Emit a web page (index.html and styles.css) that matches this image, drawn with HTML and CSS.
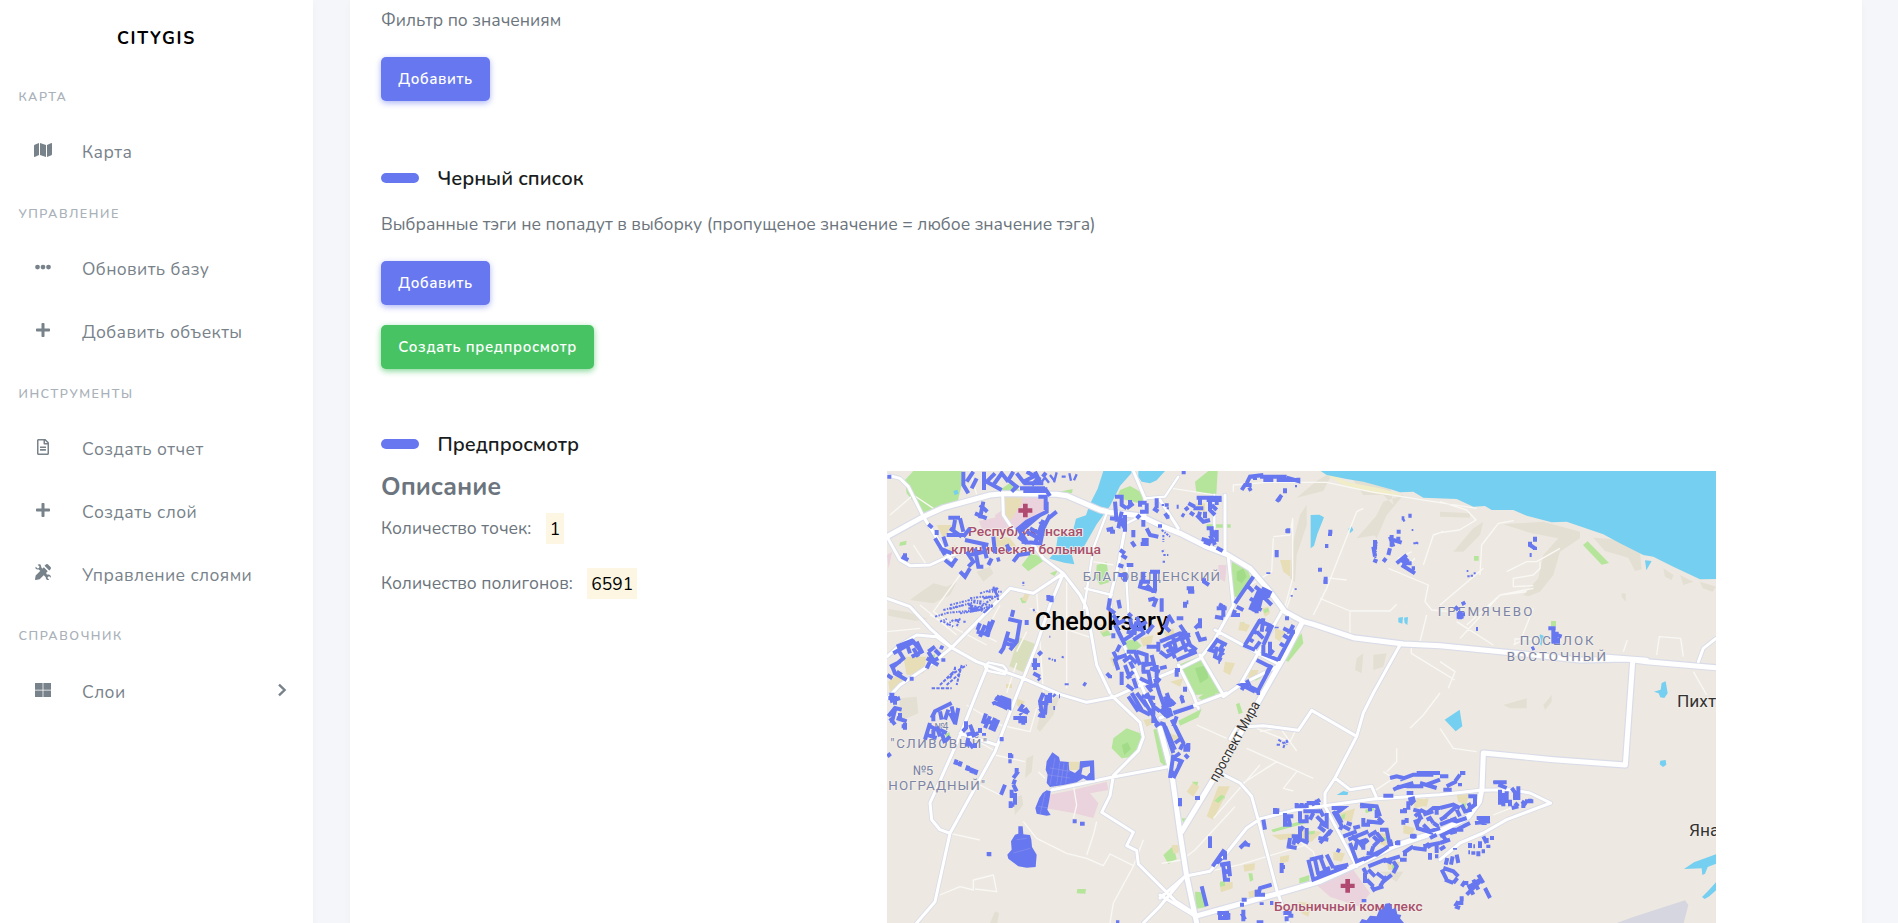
FILE: index.html
```html
<!DOCTYPE html>
<html lang="ru">
<head>
<meta charset="utf-8">
<title>CITYGIS</title>
<link rel="stylesheet" href="styles.css">
</head>
<body>
<div class="layout">
  <aside class="sidebar">
    <div class="brand">CITYGIS</div>
    <nav>
      <h6 class="nav-head">КАРТА</h6>
      <a class="nav-item"><svg class="ico" viewBox="0 0 576 512"><path d="M0 118v346c0 11 11 19 22 15l138-63V32L20 88C8 93 0 105 0 118zm192 298 192 64V96L192 32zM554 33 416 96v384l140-56c12-5 20-17 20-30V48c0-11-11-19-22-15z"/></svg><span>Карта</span></a>
      <h6 class="nav-head">УПРАВЛЕНИЕ</h6>
      <a class="nav-item"><svg class="ico" viewBox="0 0 512 512"><circle cx="80" cy="256" r="76"/><circle cx="256" cy="256" r="76"/><circle cx="432" cy="256" r="76"/></svg><span>Обновить базу</span></a>
      <a class="nav-item"><svg class="ico" viewBox="0 0 448 512"><path d="M416 208H272V64c0-18-14-32-32-32h-32c-18 0-32 14-32 32v144H32c-18 0-32 14-32 32v32c0 18 14 32 32 32h144v144c0 18 14 32 32 32h32c18 0 32-14 32-32V304h144c18 0 32-14 32-32v-32c0-18-14-32-32-32z"/></svg><span>Добавить объекты</span></a>
      <h6 class="nav-head">ИНСТРУМЕНТЫ</h6>
      <a class="nav-item"><svg class="ico" viewBox="0 0 384 512"><path d="M288 248v28c0 7-5 12-12 12H108c-7 0-12-5-12-12v-28c0-7 5-12 12-12h168c7 0 12 5 12 12zm-12 72H108c-7 0-12 5-12 12v28c0 7 5 12 12 12h168c7 0 12-5 12-12v-28c0-7-5-12-12-12zm108-188v332c0 27-21 48-48 48H48c-27 0-48-21-48-48V48C0 21 22 0 48 0h204c13 0 25 5 34 14l84 84c9 9 14 21 14 34zm-128-80v76h76zm80 412V176H232c-13 0-24-11-24-24V48H48v416z"/></svg><span>Создать отчет</span></a>
      <a class="nav-item"><svg class="ico" viewBox="0 0 448 512"><path d="M416 208H272V64c0-18-14-32-32-32h-32c-18 0-32 14-32 32v144H32c-18 0-32 14-32 32v32c0 18 14 32 32 32h144v144c0 18 14 32 32 32h32c18 0 32-14 32-32V304h144c18 0 32-14 32-32v-32c0-18-14-32-32-32z"/></svg><span>Создать слой</span></a>
      <a class="nav-item"><svg class="ico" viewBox="0 0 512 512"><path d="M22 364 0 488c-2 14 10 26 24 23l124-22 260-260L283 103zM497 94l-80-80c-19-19-51-19-70 0l-42 42 150 150 42-42c19-19 19-51 0-70zM110 164l74 68 66-66-40-50-30-90c-28-22-68-20-96 0l62 58-22 40-40 22-58-56C6 110 12 142 34 160c22 18 52 16 76 4zM350 280l-76 70 70 74 4 40c25 50 75 56 107 38l-58-58 20-36 36-20 54 48c10-38-12-78-46-92-30-10-60-6-76-4z"/></svg><span>Управление слоями</span></a>
      <h6 class="nav-head">СПРАВОЧНИК</h6>
      <a class="nav-item"><svg class="ico" viewBox="0 0 512 512"><path d="M0 32h244v212H0zM268 32h244v212H268zM0 268h244v212H0zM268 268h244v212H268z"/></svg><span>Слои</span><svg class="chev" viewBox="0 0 10 14"><path d="M2 1.6 7.6 7 2 12.4"/></svg></a>
    </nav>
  </aside>
  <main class="card">
    <p class="lead">Фильтр по значениям</p>
    <button class="btn">Добавить</button>
    <h2 class="title"><span>Черный список</span></h2>
    <p class="lead lead-black">Выбранные тэги не попадут в выборку (пропущеное значение = любое значение тэга)</p>
    <button class="btn">Добавить</button>
    <button class="btn btn-success">Создать предпросмотр</button>
    <h2 class="title title-preview"><span>Предпросмотр</span></h2>
    <div class="preview">
      <div class="about">
        <h3>Описание</h3>
        <p class="stat"><span>Количество точек:</span><mark>1</mark></p>
        <p class="stat"><span>Количество полигонов:</span><mark>6591</mark></p>
      </div>
      <svg class="map" viewBox="21 18 2487 1356">
        <defs>
          <path id="r1" d="M21 215 130 155 190 128 330 90 370 86 530 88 560 92 660 135 690 142 780 152 850 185 900 205 980 245 1040 268 1110 310 1170 380 1215 440 1270 470 1300 478 1420 518 1570 537 1680 542 1960 570 2100 585 2240 582 2300 590 2508 608M2170 576l130 10M945 1354l255-70 120-35 100-45 120-60 150-50 75-39 33-45 8-40 4-106 210 20 216 16 22-310M1265 475l-50 95-65 114-100 176-145 240M840 790l35 134 25 180 20 130 30 140"/>
          <path id="r2" d="M21 400l69 25 60 65 65 58 75 42 60 22 80 28 110 48 80 24 79-15 141-62 60-25 60-30 40-50 60-108-15-144M215 548l175-178 70 15 90-60-60-45-25-35-65-50-30-45-2-60M550 325l50 65 20 40 30 170 40 84M550 325l-40 95-40 120-60 150-65 170-135 245-45 205-55 64M320 610l-30 74-55 140-85 190 5 50 25 30 30 11M240 805l110 35M21 30l39 10 25 25 45 90 60 95 25 35M21 215l39 70 30 17 60-2 65-30 80-20M215 548l-45-33-60-5-50 30-39 35M215 548l-65 52-90 60-39 40M760 18l35 82v50M840 105l55 85M1035 90v178M735 190l-20 110-28 110 15 60 38 90 100 230M695 692l85 80 10 45-15 40-75 75-10 60-25 50 95 60-20 40 30 15 5 40 110 110 65 42M515 975l180-38 145-27 30-6M915 1234 990 1219 1040 1164 1100 1089 1140 1062 1240 1036 1335 1022 1480 1002 1680 989 1800 976 1890 974 1950 984 2012 1014 1880 1064 1810 1104 1740 1134 1680 1184M1030 929l50 25 35 40 25 90 50 190 35 100M1335 1024l95 180M1335 1024v-40l30-45 65-125 20-70 30-60 80-144M1365 939l45 35 65-10 15 35M1430 814l-135-78-40 60-105-14-80 5-20 35M915 1234l-75 65M790 1374l50-50 75-90M840 1290l105 64M895 600l45 90 15 40M1005 495l195 105-120 60-50 35M1205 440l-125 220M960 570l70 120M840 759l200-75M2455 590l15-40 38-30"/>
          <path id="r3" d="M680 145l-40 105-28 180M615 370l80 20M740 300v60l5 80M1003 90v100M795 100l60-5 40-60M790 150l-80 40M325 592l45 10 10 12-5 14-50-10-10-12z"/>
        </defs>
        <rect class="land" x="0" y="0" width="2520" height="1400"/>
        <g class="hill">
          <path d="M110 390l50-35 40 10 30-15-20 40-50 25-70-10zM25 432l60 10 60 20-40 5-80-15zM290 320l40-15 10 20-30 25zM60 700l50-5 5 50-60 25z"/>
          <path d="M1360 18l-30 60-80 20 60-50zM1470 190l40-80 60-20-50 60-30 70zM1260 150l20-30v60l-30 90-5 80-15-10 10-110zM1540 120l-10-60-120-30 40 60 60 0zM1430 220l70-80 30-10-40 80zM1430 580l20-15-5 60-20-10zM1480 570l40-5-10 40-30 10z"/>
          <path d="M1870 178l120-8 110 30 0 20-60 40-20 70-40 50-35 14-15-4 45-50 15-70 45-50-80-15zM1720 260l60-70 30-20-10 40-50 50zM1680 140l90 5v13l-90-3zM2140 218l60 5 80 40 5 50-20 5-20-40-70-20zM2350 310l30 20-5 15-20-10zM2400 330l40 20-30 10zM2460 350l48 15-10 15-30-10zM2225 385l12 0v25l-12-15zM1870 720l70-20 0 30-50 0zM1990 720l25-30 0 20-20 25z"/>
          <path d="M470 790l20-70 50-30-20 60-40 50zM440 880l20-10-5 50-20 20zM400 1000l25-10 5 30-25 30zM330 1374l15-35 12 5-5 30zM1500 1220l70 0-20 30z"/>
        </g>
        <g class="green">
          <path d="M75 45 100 18h145v40l-15 65-100 22-50-60zM355 78l40-28 25 28zM530 82l48-10-2 12-24 3zM425 300l30-38 40 22-50 35zM510 325l25-10-12 18zM720 75l30-12 45 25-5 30-80-20zM945 50l40-32h28l-4 70-60-5zM980 178h72v10h-72zM650 300l30-8 8 60-28 8-12-20zM1055 290l50 25 10 40-40 45-20-10zM60 232l20-5-2 12-20 4z"/>
          <path d="M895 600l60-25 70 110-80 5zM1240 530l25-25 5 30-45 55-12-5zM2109 240l14-11 64 65-22 5zM1782 273h14v14h-14zM2013 468h15v16h-15zM730 530l35-8 20 20-30 25-25-10zM1080 480l10-10 8 10-10 10zM420 400l20-5-2 18-12 2zM660 500l20-8 15 18-25 5z"/>
          <path d="M700 820l40-30 40 15 10 25-30 45-35 5-30-30zM820 794l20-6v100zM840 820l30 70-10 20-20-20zM895 767l70-35-10 25-55 25zM955 698l20-14h30l5 15-40 10zM1068 718l10-5 10 30-12 5zM850 1170l30-28 10 40-25 15zM905 1060l15 0-8 20zM945 1280l25 2 5 45-28 5zM1258 1240l30-10v20l-30 5zM592 1272l26 0-2 14-26-1zM1015 1007l15-18 5 10-15 15zM1174 1094l110-32-5 12-100 28z"/>
        </g>
        <g class="dgreen"><path d="M725 840l18-8 10 20-20 18zM1070 320l20-10 10 25-15 20-15-10zM945 610l35-10 5 40-25 15z"/></g>
        <path class="olive" d="M415 517l50 20-35 85-42-18z"/>
        <g class="pink"><path d="M425 95l60 0 20 35-90 80-60-10-10-50 60-40zM297 168l70-15 10 30-65 25zM1015 300l25 0-5 50-20-10zM505 990l75-15 100-25 5 25-55 10 25 30-15 44-60-15-80-14zM1310 1260l110-45 50 70-30 40-90-30zM21 270l15-10-10 50z"/></g>
        <g class="beige"><path d="M370 95h55v20l-40 60-12-20zM350 210l40 10 20 25-60 25-10-40zM170 180l50 0-30 40zM205 250l20-10 10 25-20 15zM435 385l15 0-10 25-15-5zM660 480l25-10 10 20-30 15zM70 575l70 0-10 50-50 5zM25 650l40-30 5 30-40 35zM378 657h18v12h-18zM690 580l20-10 5 20-15 15zM780 520l40-10-5 25-25 10z"/><path d="M1200 285l32 0-2 50-20-15zM950 115l25 0 0 25-25-5zM1035 590l30 5-15 35-20-10zM1080 470l30 10-10 20-25-5zM1105 615l30 0-5 20-25 5zM1185 490l30 10-15 30-15-10zM870 650l40-10-10 25zM1145 430l20-5 5 20-15 10zM850 500l30-10 5 20-25 10z"/><path d="M410 700l25 10-15 20-10-10zM565 890l40 0-10 25-25 0zM920 980l20-30 18 15-18 30zM1015 964l35 0-50 100-20-10zM870 805l30 10-10 20-20-5zM1175 1110l70-5 0 15-45 5zM1265 1095l60 5-30 30-30-5zM1200 1175l28-5-3 20-25 5zM1090 1200l35-5-2 20-30 5zM1105 1280l30-8v25h-28zM1018 1255l40-5 0 20-35 12zM875 1140l25 0-5 25-15 0zM1380 1045l45-15-10 40-30-5zM1600 1010l45-10-5 20-35 10zM1570 1080l35 10-10 20-25-5zM1490 1105l40 0-10 40-25-10zM1360 1160l35 5-10 25-25-5zM1520 1190l40 0-5 25-30 0zM1255 1310l40 5-10 40-20-10zM1730 990l38-3-8 30-25-5zM790 765l25-5 5 15-20 10zM1610 1000l35 5-5 20-30-5z"/></g>
        <g class="green"><path d="M150 572l15-4 0 15-12 3zM196 806l12-5 5 20-14 3zM1003 1007l20-18 12 5-20 20zM1455 1035l25-10 3 10-25 10zM1500 1120l20-5 3 10-20 5zM1535 1200l12-3 5 12-15 5zM1285 1100l20-3-2 10-20 2zM1105 1225l12 0 3 20-10 5zM1020 1250l15-2 0 15-14 2zM1745 1015l12 0 2 15-10 2zM1385 1050l12-5-3 15-14 8zM935 950l20 0-4 12zM1150 434l14-5 4 10-15 6zM1122 632l16-5 4 12-16 8z"/></g>
        <path class="beach" d="M1320 18h20l60 32 110 22 50 16v6l-70-8-100-26z"/>
        <g class="water">
          <path d="M1322 18 1340 30 1400 42 1450 50 1530 72 1560 82 1600 80 1630 98 1730 102 1780 125 1815 123 1835 135 1900 135 1940 152 2015 172 2060 170 2170 208 2220 235 2290 270 2320 275 2380 305 2460 343 2508 342V18z"/>
          <path d="M670 18h90l-40 45-30 60-40 55-40 70-35 20 8 30-30-5-45-12 10-12 20 2-10-20 5-35 45-15 10-40 30-10 10-30 25-50zM775 18h80l-25 28-20 9-25-5-10-15zM1292 150l26-1 14 8-20 50-10 35-10 8zM1405 192l10-8 5 12-10 8zM220 78l12-4 4 12-12 4zM1555 458l14-2-2 20-12-4zM1572 458l12-2-2 24-8-6zM1694 764l45-30 8 50-20 15zM2295 286l20 2-16 28zM2322 680l20-6 3-20 12-5 6 36-10 14-12-2-5-12zM2341 887l16-2 2 14-10 7-10-8zM1370 990l20-12 15 4-3 8zM2412 1212l30-20 66-24v28l-25 10-8 20-8 4-2-20zM2466 1296l18-18 24-26v24l-20 18-14 8zM1980 508l12 5-8 30-8-12z"/>
        </g>
        <path class="port" d="M2210 1374l50-18 155-50 10 14-14 54z"/>
        <g class="thin">
          <path d="M21 500l100-10M30 150l70-60 60 40M100 240l40 60M240 330l-80 110 60 40M270 18l20 70M360 420l-50 90 40 20M470 380l20 300M560 350v320M640 520l-90-30M380 684l30-90M700 300l-60-10M450 430l170 60M440 500l-30 60M150 450l170 90M120 420l110 90"/>
          <path d="M877 70l160 25M1060 80v-20l100-8 180 0 130 28 320 50M1180 220l-5 100-80 50M1180 215l50-5 8-50v180l-30 110M1300 450l40-80 90-230 20-10M1400 345l-70-8M1320 400l90 38h120l20-20M1410 440v70M1240 370l-20 60M1525 310l120 50-10 50 20 25 60 5M1595 260l-40 20 20 30 30-30M1640 450l-20 80M1594 540v25l130 80M1630 300l30-90 30-10M1680 420l130-110M1760 480l100-90 100-20M1680 110l80 25 28 30-50 30-58 8M1800 330l5-90 50-65 46-8M1740 520l120-130 80-10M1880 320l60-30 30 0 70-40M1980 290v20l-20 20-60 10v25l60-3M1905 540v-18h60l-10 20M1960 430l-40 100-20 10M2330 570l8-55 64 5 8 55M2440 620l40 70M2230 560l12-35M1730 470l110 70M1680 590l45 30-20 50"/>
          <path d="M300 960l60 30M210 1105l90 20M430 1070l40 50 60 30 30 15 60 15 50 22 20-35 70 35M620 1170l20-60 10-40M580 960l10 60-10 40M475 920l20 20M180 1290l60-25 40 10v-30l60-15 10 50-65-8M690 1374l10-60 60-110 30-80M845 1195l60-10 40-30 120-130M920 1234l160-35 200-60M1100 850l200 90M1190 890l-110 70M1250 920l-40 50 30 8M950 780l90 40M1590 790l40-40 50-66M1520 920l30-30 0-40M1510 920l30 20-60 40M1680 790l40 60 70 10M1000 1060l140-160M1260 1130l40 30 20 70M1840 1050l100-40M345 870l90 20M250 805l90 50M260 720l100 60 90 20 20-70M1130 790l100 40 20-40M1140 800l60-12 50 70"/>
        </g>
        <g class="case"><use href="#r3" class="c3"/><use href="#r2" class="c2"/><use href="#r1" class="c1"/></g>
        <g class="road"><use href="#r3" class="w3"/><use href="#r2" class="w2"/><use href="#r1" class="w1"/></g>
        <g class="labels">
          <g class="hosp">
            <path class="cross" d="M429 116h14v14h14v13h-14v14h-14v-14h-14v-13h14zM1396 1242h14v14h14v13h-14v14h-14v-14h-14v-13h14z"/>
            <text x="264" y="213" textLength="345" lengthAdjust="spacingAndGlyphs">Республиканская</text>
            <text x="213" y="266" textLength="450" lengthAdjust="spacingAndGlyphs">клиническая больница</text>
            <text x="1182" y="1339" textLength="446" lengthAdjust="spacingAndGlyphs">Больничный комплекс</text>
          </g>
          <g class="dist">
            <text x="608" y="347" textLength="412">БЛАГОВЕЩЕНСКИЙ</text>
            <text x="1673" y="453" textLength="284">ГРЕМЯЧЕВО</text>
            <text x="1919" y="539" textLength="222">ПОСЁЛОК</text>
            <text x="1880" y="588" textLength="298">ВОСТОЧНЫЙ</text>
            <text x="163" y="796" textLength="42" class="sm">№4</text>
            <text x="31" y="849" textLength="290">"СЛИВОВЫЙ"</text>
            <text x="98" y="929" textLength="62">№5</text>
            <text x="25" y="976" textLength="290">НОГРАДНЫЙ"</text>
          </g>
          <text class="city" x="464" y="495" textLength="402" lengthAdjust="spacingAndGlyphs">Cheboksary</text>
          <g class="town">
            <text x="2391" y="727">Пихт</text>
            <text x="2427" y="1114">Яна</text>
          </g>
        </g>
        <g class="bld">
          <path class="k14" d="M250 20v40l15 25M280 20l-20 30M290 40l-15 30M312 20v55M345 25l-25 25 45 25M340 60l25-35 20 25M400 20l-15 25 25 20-15 15M420 70h75M430 55h60M410 25l20 25 40-20M440 20l35 20-20 20M465 20l15 30M488 35l10-12M22 35h12M430 78h70l10 15M475 95h22v40M500 110v30l-60 30-30 25M480 150l-60 50 20 30M490 165l-25 70M510 150l-20 40-10 50M530 140l-25 20M440 200l45 25M425 230l55 5M450 190l35 20M415 215l25 20M480 170l15 20M400 290l15-20 35-5M310 110l-10 50M285 145l35 15M300 120l22 20M205 158l35 0M225 165l-5 30M240 160l10 40M200 210l50 0M210 190l35 25M270 190l-20 25M165 220l30 50M190 215l10 30M180 250l35 15M195 285l25 20M215 300l15-20M240 320l15 15 15-25M260 260l20 30-15 15M285 250l10 55 15 0M270 270l45-10M310 240l10 40M340 215l5 50M325 300l10-20M380 238l10 20M65 275l20 10M75 265v20M145 178l12 10M170 195v15M255 225l70 15M350 285l10-3"/>
          <path class="k8" d="M485 50l10-12 12 15M510 30l15 20M530 22l-8 30M545 35h12M568 25l5 22M590 28l-8 18M490 70h12"/>
          <path class="n" d="M165 455l40-12 60-5 40-15 50-35M190 435l60-15M210 420l60-15 40 5M210 432l70-20 60 10M240 445l60-10 20 10M270 400l35-5 50 0M300 385l50-15M325 380l40 0M340 365l15 40M190 470l30 15M200 480l20-15 20 5M240 460l-10 25M265 420l50 10 15-10 10 10M180 470l20-8M250 470h10M430 350v12"/>
          <path class="k8" d="M265 430l30 0M270 440l40-8M310 400l25-5M225 465l12 2M345 380l8-12M340 370l15 25M270 415l10 25M330 425l-15 15"/>
          <path class="k14" d="M300 475l-8 20M315 480l-15 35M330 470l-12 40M340 465l-20 50M290 500l40 10M400 435l-5 20M385 462l35 8-10 60-20 25M385 500l-15 50-10 15M375 520l30 10M375 535l22 5M500 400l15 5M515 392v20M505 390v10M440 480v-15"/>
          <path class="k14" d="M50 545l50-20M40 565l60-35 20 25M110 530l15 30-30 15M55 555l15 25-30 25M60 590l-30 15M80 535l10 30M100 550l15 25M35 600l10 25 35 20M50 620l15 10M95 635v12M22 630l15 10M145 560l20 35M165 545l-20 15M140 580l35 20M180 545l10 5M175 580l-20 10M190 590v-10M150 590l-10 20M165 555l15 15"/>
          <path class="n2" d="M190 650l30-25 40-25M200 660l40-35M155 670l60 0M210 640l15-30M180 660l40-40M225 605v20M245 600l-15 60"/>
          <path class="k14" d="M455 600h25M465 590v25M485 560l-10 10M460 625l20 10M475 640l5 5M465 580v10M560 655v6M610 655l8 5M680 625l10 10M690 640v-10"/>
          <path class="n" d="M505 580l15 5M525 590v-10M545 575l10 5M508 515l3 0M460 432l5 10"/>
          <path class="k14" d="M705 95h20v25l15 10M705 110l5 60M690 160l50 5M725 140l-10 50M700 190l-20 5M735 150l0 50M715 160l20 30M740 130l20-15M750 105v20M770 160l10-10M780 125v-12h20M800 115v25l-20 0M820 130l15 10M790 165v20M760 195v22M785 225h15v15M800 225v12h-18M755 230l10 15M800 190l10 20 25 5M720 255l15 10M725 270l15 10M715 300l15 5M740 300h20M715 330h20v20M830 100v30M690 200l15 0"/>
          <path class="k14" d="M790 320v30l20 0M785 345l-5 20 50 15M810 320h30M825 325v50M800 360l20 20M805 405l20-5M830 400l-10 25M690 400l-5 30 20 15M715 405l5 25M700 450l15 25 20-10M705 480l30 60M725 530l30-20 15-40M740 500l30 5M745 445l10 10M750 460l5 25 25 10M770 455l20 50-30 20M700 505v15M820 480l-20 25M785 480l15-10M720 540l-10 20M700 560l10 20 30-10M720 575l-15 10 10 30M730 590l20-15 20 20M740 560l25 0 15 40M735 600l15 40M760 620l-20 20M770 560l30 10 0 30M790 590l0 30M785 620l20 0 10 50M760 640l10 30M780 640l30 15M725 620l0 40M740 660l20 15M815 570l10 40M830 600v60M800 545l30 0M835 560v-30M840 640l-20 25M825 640l15 50M795 600l25-5M810 610l30 10M750 590l10 20M800 660l15 20"/>
          <g transform="translate(840 0)">
            <path class="k14" d="M65 22h12M245 75l10-15 20 0M260 55l10-20 40-5M285 30v15M300 35h80M310 45h30M350 45h70M380 38l35 10 0-10M275 70l-10 5M375 70v15M365 90l-15 20M355 100l8 5M385 190v15M376 198h12M350 255v22M325 322v5M505 200h12M510 205v8M495 243h10M480 308v12M497 335v22M490 350h12M745 152h10M725 160h8"/>
            <path class="k14" d="M110 98h75M120 95v25M140 105h45M150 105v30l15 15M170 100v20M100 130h30M85 115l20 10M120 140l-5 20M110 150l20 20 20-5M135 140v20M50 125h6M65 148l8 5M75 135l10-8M90 142l12 8M155 120l15 15M140 190h15v40M170 195v35M150 210l15 30M125 222l40 10M170 248l18 10M20 115v10M15 145l10 15M18 155h10M0 178v10M150 188l20 30M132 230l20 8"/>
            <path class="n" d="M5 195l25 20M10 210v20M5 260l10-5M10 270h15M15 290h-10M5 120h12M20 130h8"/>
            <path class="k14" d="M80 370h22M90 365v20M85 380h18M132 340v10l15 10M75 410v18M5 400v40M80 412l5 0M25 450l15 25M25 460l-10 30M10 480l20 20M0 530l60-25 30 5M10 545l60-30M0 560l20 15 70-40M40 520l10 40M60 510l20 50M75 500l15 40 20 15M25 530l20 50M90 510l-20 10M50 585l60-25M60 480l20 30M50 460l20 0M85 560l20-5M120 460v15l-15 15M110 500l10 25 20-5M120 475l0 15M185 415l-5 10M170 430l30 0M190 420v35M165 455l25 5M20 560l30-15M0 610l20-5"/>
            <path class="k14" d="M280 335l-55 80M265 365l15 15M225 435l-5 15 20 0M230 425l20 10M300 370l-30 65M285 365l20 15-25 60M310 375l-15 60M270 400l30 20M270 420l35 15M290 395l30 5M305 370l30 15M325 380l-10 20 20 20M330 395l-20-10M290 445v-10M375 460h12M350 485v5M300 465l-45 75M280 495l10 10M265 520l15 10M250 540l35 15M300 530l-15 20M295 465l40 20-25 55M330 475l-10 25M290 500l20 20M310 460l-5 40M400 480l-10 20 15 0M390 500l-20-10M385 520l-15-10M375 545l-15-10M400 500l-45 85M355 585l-50-20M310 540l0 30M330 530v50M340 555l-15 20M170 525l30 15M175 520l-25 35 15 5M190 535l-10 20 10 15M170 545l-5 30 20 10M190 550l-15 35M180 590l-5 0M290 585l40 20-10 20M335 600l-45 85M285 680l-40-20 20-5M260 645l10 20M270 665l20 10M45 615l15 0M50 625v10M75 665v15M250 665l-5 10M50 630l0-15"/>
            <path class="k14" d="M645 225v25M640 245l5 30M640 285l12 5M695 210v35M690 250l-5 20M670 290l8-10M710 200h12M715 215v20M700 225l25 8M690 215l10 30M740 270l-30 25M735 280l10 10M725 285l10 10 20 0M725 300l40 25M755 310l10 0"/>
            <path class="n" d="M760 235h15M770 230v8M735 165l-10 5M750 150v10M395 390v5M407 370v5M408 60v10M755 195h5M645 290l5-60"/>
          </g>
          <g transform="translate(1680 0)">
            <path class="k14" d="M285 215v15M270 230v15M270 240l15 10M275 270h-6M285 245v10M45 425l10 10M68 410l5 10M50 448l25 0M60 438v25M65 445v15M50 455l20 0M108 492h6M325 490h22M340 490v45M350 500v10l15 5M335 530h25M348 515l-5 15M350 525l10 0M275 552l8-4"/>
            <path class="n" d="M80 318h5M92 332h8M104 322v6M82 334h8"/>
          </g>
          <g transform="translate(0 684)">
            <path class="k14" d="M25 15h20v20M30 25l30-10M28 5h15M25 70l20-25 20 5M30 75l15 20M45 50l-10 40M60 60v20M50 75l30 10M75 90v20M65 100h15M22 190l10-8M155 75l10-20 50-25M160 85v-20M180 55l5 25M205 50l-10 30M215 40l10 50M235 45l-10 50M210 60l15 30M150 90l-15 50M160 110l0 25M140 125l30 10M170 100l10 30M150 100l30 15M185 120l10 30M195 145l15-15M180 110l20 10M258 85l0 20-10 10M270 95l10 25-20 5M275 130l20-10M260 140l20 25M285 150v15M265 135l-5 25M300 105v15M312 120v8M318 62l-10 30M330 70l-15 35M345 75l-15 35M355 80l-15 35M310 80l40 15M230 200l-5 15M243 205l-5 15M228 208l15 5M265 218l-5 15M278 225l-5 15M290 230l-5 15M262 225l25 10M345 15l35 20M350 10l35 20-10 20M345 30l35 15M365 15l-10 25M340 25l5 10M360 12l28 10v22l-30-14M430 35l-10 15 25 10M435 45l10 15M420 60l5 5M400 75h30v20M435 70v20M415 85h15M490 0l-10 25 5 30M500 5l-5 60M475 30h30M510 0v30M480 45l10 20 0 10M475 65l10 5M520 5l5 5M537 10h3M520 45h5M365 133v12M370 138h-10M390 180v15M385 205h10M410 225v15M415 235l-15 20M405 260l-5 15M400 275l10 20M395 290v25M405 300v35M392 325v20M398 335h5M375 275l-12 30M385 190h15"/>
            <path class="solid" d="M500 205 517 178 537 192 540 205 566 207 568 232 585 240 598 228 600 205 642 202 644 262 620 262 610 256 590 268 550 276 510 282 500 270 503 245 497 230zM470 362 466 345 478 315 488 300 500 292 512 295 508 320 502 350 512 366 500 368zM415 400H428L430 424 450 426 454 440 456 462 470 485 467 522 440 524 415 520 385 497 382 485 395 470 393 445 405 425 415 422z"/>
            <path class="k14" d="M578 385h12M600 392h14M320 483h14M328 480v10M708 688h10"/>
            <path class="k14" d="M755 0l30 50M770 0l30 40M745 10l30 45M800 0l20 40 20 15M790 20l30 50M770 45l40 20M810 50l20 40M820 30v60M825 100l15-10M785 10l40 5"/>
            <path class="gap" d="M525 195l-15 80M540 205l-10 70M552 210l-10 65M565 210l-8 60M510 225l60 10M500 245l70 10M495 300l-15 65M475 340l30 5M410 440l30-4M400 480l50-14"/>
            <path class="land" d="M608 224l22-4v18l-10 12-16-6z"/>
          </g>
          <g transform="translate(840 684)">
            <path class="k14" d="M0 5l25 70M15 10l20 60M5 45l30-10M30 20l15 15M20 0l15 40M65 15l5 15M60 10l10 5M40 60l60-20M10 90l30 90M0 90l15 5M50 70l-10 30M35 80l35 70-10 20M20 120l15 30M45 150l20-15M85 150l0 20M70 170l20 0M75 185l10 10M40 185l-10 70M40 195l25 10-25 50M60 180l-20 15M35 235l10 15M55 225l5-15M60 315v25M105 315h15M290 0h10M0 50l20 20M15 100l30 70M80 155l-5 15"/>
            <path class="n2" d="M355 140l15 10 15-5M350 155h10M370 165l5-15M380 140v15"/>
            <path class="k14" d="M150 430v35M158 520l35-50M170 510l15-15M195 475v25M180 515l30-5M190 520l5 40 15 0M205 505l5 45M190 540l20-10M240 465l20-20M250 452l20 5M345 345v12h12M340 352h18M310 380l5 30M370 370h30M375 360v35l20 0M385 375l5 20M405 340h35M410 330v15M425 330v15M440 330v15M455 335l25-15M470 320l0 15M480 330h-40M420 355v30M430 355h50M440 365v20l-25 0M460 360l-10 20M480 350l10 20M470 370l30 30M480 390l20 10 0-40M475 400l20 15M420 400v40l-10 10M440 405l0 40M430 400l-10 15M425 440l20 10M395 430h15v20M390 435l-5 30M380 460l30 5M400 455l5-20M480 450l30-35M515 410l-10 15M475 435l30 5M365 510v30M360 522h15M445 500l15 60 100-40M450 500l40-10M480 490l15 40 15-5M500 485l20 40M465 500l10 45M530 470l10 5M520 525l45-10M470 545l40-15M125 580l15 60M295 605l5-20 35-10M290 590v15l25 0M245 620h15M240 635h12M250 650v35M245 660l10 20M305 628v8M330 630h10M180 655v25M195 655v25M172 660h35M205 660v20M175 675h30M290 688h20M370 660h25M380 670v15M385 668h15"/>
            <path class="k14" d="M515 345h35l-20 15 15 30M520 355l20 35M535 380l10 20-5 10M550 400l20 10M560 390l15 5M600 340h30l0 15M600 335l50 5 10 30M650 350v25M610 375l0 20 20 0M620 385l45 5M655 375l15 15M600 400l-20 5M550 430l40-15M565 440l60-25M570 450l20 55 25-10M585 470l5-20 30-10M610 440l0 30M600 460l25-20M625 430l25-15M640 430l15 15-15 15M660 410h20l10 50M650 420l20 25M620 480l30 5 35-25M610 500l60-30M640 460l-10 30M690 440l5 20M705 450h15M715 442v15M750 430h20M760 422v15M575 430l25 20"/>
            <path class="k14" d="M610 525l10 20M615 540v30M625 520l50-20 20 10M625 530l20 20M635 580l10 15M640 590l30-10M660 580l20-30M665 570l30-25M700 540l10-20-10-15M670 505l50-15M720 500h20M730 480l30-20M735 490v-15M760 465l40 5M790 460l50-10M830 450v30M810 480v20M825 490h10M810 435l20-10M800 450l10 15M650 540l20 15M620 560l20 20"/>
            <path class="k14" d="M690 255l20-5 20 5M720 260l40-15 60 0M770 240h70M700 290l20-10M710 285l50-15M740 280h50M780 270l50 15M800 275l40-15M670 308h30M740 300h20M750 295v10M745 325l0 25M750 335l15-15M720 355h20M735 345v15M760 350l20 5-15 15M775 360l10 20M730 380v15M740 375v15M765 380l10 30M780 375l-10 20M790 395l20 20 30-10M790 365l30-10M800 360l20-15 20 0M780 350l20 10M830 350v15M800 380l10-5 10 15M820 390l15 10M770 405l50 15M745 320l20-5"/>
            <path class="solid" d="M598 690l8-12 14 4 10-14 20 2 8-20 12-2 6-16 14-2 6 18 12-2 4 18 12 2-4 10 12 14zM605 618h14v10h-14z"/>
          </g>
          <g transform="translate(1680 684)">
            <path class="k14" d="M0 250h25M10 290h25M20 280l30-15M45 265l15-20M60 240h16M60 270v10M0 345l40-10 20 10M0 380l20-10M0 395l50-20M10 375l40-35M30 380l20 5 30-10M50 350l10 20M65 335l10 20 20-5M85 310h20v25l-20 15M95 350l-10-20M0 430l40-20 30 0M0 450l30-10M10 430l10 15M50 410l40-20M30 420l20-5M70 400l20-10M105 390l45-5M110 375l40 0M115 380l30 0M125 390l15 0M0 470l15-10M160 268h40M175 275l25 10M180 290v45M190 300v40M185 320h15M200 330v-35M215 285l15 20M235 280v35l-15 0M225 300v20M210 320l0 20M215 345l20-5M225 330l10 10M250 345v-15M245 325l15 10M255 325l25 0M270 325v-8M165 270v-5M90 450v15M100 460h5M120 445v20M130 430l10 20M140 435v15M145 455v10M150 435h12M85 478h5M100 485v-10M115 475v15M125 475l10 0M45 465v5M22 495l-5 20M38 490l-5 25M50 485l5 25M5 530l15 30M10 525l30 10 15 15M15 560l25 10M40 570l12-15M65 580l10-15M70 570h15M85 575l15 30M100 560l15 30M115 545l15 25M90 580l30-20M80 605l40-40M135 585l15 30M65 610v15M55 630h15M45 640l15 5M55 625l-10 15"/>
          </g>
        </g>
        <text class="street" transform="translate(1011 953) rotate(-61)" textLength="268" lengthAdjust="spacingAndGlyphs">проспект Мира</text>
      </svg>
    </div>
  </main>
</div>
</body>
</html>
```
FILE: styles.css
```css
* { box-sizing: border-box; }
html, body { margin: 0; height: 100%; overflow: hidden; }
body { background: #f4f6f9; font-family: Nunito, "Noto Sans", sans-serif; font-size: 17.5px; color: #6c757d; }
.layout { display: flex; height: 923px; }
.sidebar { width: 313px; flex: none; background: #fff; box-shadow: 0 4px 8px rgba(0,0,0,.03); }
.brand { height: 66px; line-height: 76px; text-align: center; font-size: 17.5px; font-weight: 700; letter-spacing: 1.75px; color: #000; }
nav { display: flex; flex-direction: column; }
.nav-head { margin: 0; height: 54.2px; padding: 20.5px 0 0 18.5px; font-size: 12.6px; line-height: 20px; font-weight: 600; letter-spacing: 1.55px; color: #a9b1b9; }
.nav-item { display: flex; align-items: center; height: 62.9px; padding: 0 26px 0 33px; color: #78828a; letter-spacing: .4px; }
.nav-item span { padding-top: 1px; }
.ico { width: 20px; height: 16px; margin-right: 29px; margin-top: -4px; fill: #78828a; flex: none; }
.chev { width: 10px; height: 14px; margin: -3px 0 0 auto; fill: none; stroke: #78828a; stroke-width: 2.4; }
.card { width: 1512px; margin-left: 37px; padding: 4px 31px 0; background: #fff; box-shadow: 0 4px 8px rgba(0,0,0,.03); display: flex; flex-direction: column; align-items: flex-start; flex: none; }
.lead { margin: 0; height: 30px; line-height: 32px; white-space: nowrap; }
.btn { height: 44px; border: 0; border-radius: 5px; padding: 0; margin: 23px 0 0; color: #fff; background: #6777ef; box-shadow: 0 2px 6px #acb5f6; font: 600 15px/44px Nunito, "Noto Sans", sans-serif; letter-spacing: .62px; width: 109px; white-space: nowrap; }
.btn-success { width: 213px; margin-top: 20px; background: #47c363; box-shadow: 0 2px 6px #81d694; }
.title { display: flex; align-items: center; height: 30px; margin: 62px 0 0; color: #191d21; font-size: 20px; font-weight: 600; line-height: 30px; }
.title::before { content: ""; width: 38px; height: 10px; border-radius: 5px; background: #6777ef; margin-right: 18.5px; }
.title span { padding-top: 2px; }
.lead-black { margin-top: 15px; }
.title-preview { margin-top: 60px; }
.preview { display: flex; margin-top: 12px; }
.about { width: 506px; flex: none; }
.about h3 { margin: 0; height: 30px; font-size: 25px; line-height: 32px; font-weight: 700; }
.stat { display: flex; align-items: center; margin: 12px 0 24px; height: 31px; line-height: 33px; }
mark { height: 31px; background: #fdf6e3; color: #000; margin-left: 14.5px; padding: 0 4px; }
.map { width: 829px; height: 452px; display: block; flex: none; font-family: Roboto, sans-serif; }
.land { fill: #ede8e1; stroke: none; } .hill { fill: #e4dfd3; } .green { fill: #b5e59b; } .dgreen { fill: #a3dc88; }
.olive { fill: #d9dfbd; } .pink { fill: #ead3dc; } .beige { fill: #e7deb8; } .beach { fill: #f0edc8; } .water { fill: #75cff0; } .port { fill: #d5d6df; }
.thin { fill: none; stroke: #f9f8f5; stroke-width: 4; stroke-linejoin: round; }
.case, .road { fill: none; stroke-linejoin: round; stroke-linecap: round; }
.case { stroke: #d9dce8; } .road { stroke: #fff; }
.c1 { stroke-width: 22; } .c2 { stroke-width: 14; } .c3 { stroke-width: 11; }
.w1 { stroke-width: 15; } .w2 { stroke-width: 9; } .w3 { stroke-width: 7; }
.bld { fill: none; stroke: #6777ef; }
.k14 { stroke-width: 12; } .k8 { stroke-width: 7; }
.n { stroke-width: 6; stroke-dasharray: 7 4 4 3; } .n2 { stroke-width: 6; stroke-dasharray: 10 4; }
.solid { fill: #6777ef; stroke: none; } .gap { stroke: #a9aeea; stroke-width: 1; }
.labels text, .street { paint-order: stroke; stroke: #f3efea; stroke-width: 5; stroke-linejoin: round; }
.hosp { fill: #a8506c; font-size: 40px; font-weight: 500; }
.cross { fill: #b04a70; }
.dist { fill: #7c84a5; font-size: 40px; font-weight: 400; } .sm { font-size: 30px; }
.city { fill: #000; font-size: 77px; font-weight: 500; }
.town { fill: #333; font-size: 52px; }
.street { fill: #333; font-size: 43px; }
```
